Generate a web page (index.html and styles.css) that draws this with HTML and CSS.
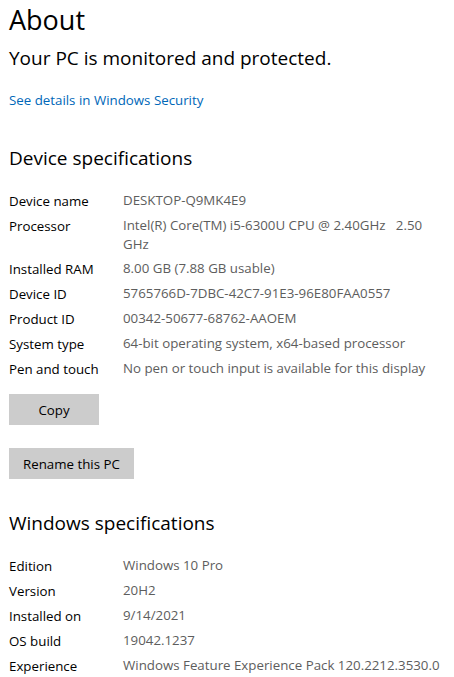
FILE: index.html
```html
<!DOCTYPE html>
<html lang="en">
<head>
    <meta charset="UTF-8">
    <meta name="viewport" content="width=device-width, initial-scale=1.0">
    <title>About</title>
    <link rel="stylesheet" href="styles.css">
</head>
<body>

    <h1>About</h1>
    <p class="status">Your PC is monitored and protected.</p>
    <a class="link" href="#">See details in Windows Security</a>

    <section class="specs">
        <h2>Device specifications</h2>
        <dl class="spec-list">
            <dt>Device name</dt><dd>DESKTOP-Q9MK4E9</dd>
            <dt>Processor</dt><dd>Intel(R) Core(TM) i5-6300U CPU @ 2.40GHz&nbsp;&nbsp; 2.50 GHz</dd>
            <dt>Installed RAM</dt><dd>8.00 GB (7.88 GB usable)</dd>
            <dt>Device ID</dt><dd>5765766D-7DBC-42C7-91E3-96E80FAA0557</dd>
            <dt>Product ID</dt><dd>00342-50677-68762-AAOEM</dd>
            <dt>System type</dt><dd>64-bit operating system, x64-based processor</dd>
            <dt>Pen and touch</dt><dd>No pen or touch input is available for this display</dd>
        </dl>
        <div class="actions">
            <button class="btn btn-copy">Copy</button>
            <button class="btn">Rename this PC</button>
        </div>
    </section>

    <section class="specs specs-windows">
        <h2>Windows specifications</h2>
        <dl class="spec-list">
            <dt>Edition</dt><dd>Windows 10 Pro</dd>
            <dt>Version</dt><dd>20H2</dd>
            <dt>Installed on</dt><dd>9/14/2021</dd>
            <dt>OS build</dt><dd>19042.1237</dd>
            <dt>Experience</dt><dd>Windows Feature Experience Pack 120.2212.3530.0</dd>
        </dl>
    </section>

</body>
</html>
```

FILE: styles.css
```css
* {
    margin: 0;
    padding: 0;
    box-sizing: border-box;
}

body {
    font-family: "Segoe UI", "Open Sans", sans-serif;
    background-color: #fff;
    color: #000;
    padding: 0 9px;
    font-size: 13.3px;
}

h1 {
    font-weight: normal;
    font-size: 27px;
    line-height: 40px;
}

.status {
    font-size: 19px;
    line-height: 36px;
}

.link {
    display: block;
    margin-top: 14px;
    color: #0067b8;
    text-decoration: none;
    line-height: 20px;
}

.specs h2 {
    font-weight: normal;
    font-size: 19px;
    line-height: 28px;
    margin-top: 34px;
    margin-bottom: 19px;
}

.specs-windows h2 {
    margin-top: 30px;
}

.spec-list {
    display: grid;
    grid-template-columns: 114px 1fr;
    row-gap: 5px;
    line-height: 20px;
}

.spec-list dd {
    color: #5d5d5d;
    line-height: 19px;
}

.actions {
    display: flex;
    flex-direction: column;
    align-items: flex-start;
    gap: 23px;
    margin-top: 15px;
}

.btn {
    font-family: inherit;
    font-size: 13.3px;
    background-color: #cccccc;
    border: none;
    height: 31px;
    padding: 0 14px;
    color: #000;
}

.btn-copy {
    width: 90px;
}
```
